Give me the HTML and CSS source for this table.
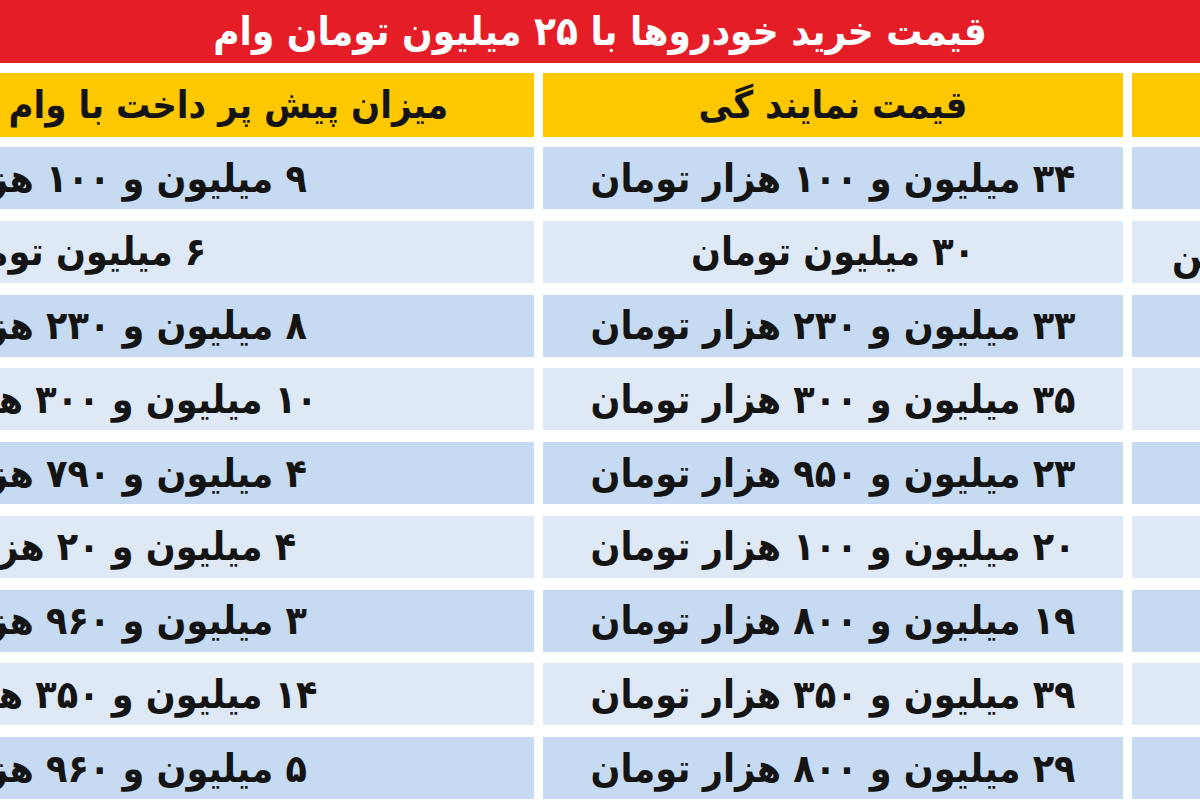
FILE: index.html
```html
<!DOCTYPE html>
<html lang="fa" dir="rtl">
<head>
<meta charset="utf-8">
<title>قیمت خرید خودروها با ۲۵ میلیون تومان وام</title>
<link rel="stylesheet" href="styles.css">
</head>
<body>
<div class="page">
  <div class="title">قیمت خرید خودروها با ۲۵ میلیون تومان وام</div>
  <div class="table">
    <div class="row head">
      <div class="cell car"></div>
      <div class="cell mid">قیمت نمایند گی</div>
      <div class="cell pay">میزان پیش پر داخت با وام ۲۵ میلیون تومانی</div>
    </div>
    <div class="row dark">
      <div class="cell car"></div>
      <div class="cell mid">۳۴ میلیون و ۱۰۰ هزار تومان</div>
      <div class="cell pay">۹ میلیون و ۱۰۰ هزار تومان</div>
    </div>
    <div class="row light">
      <div class="cell car">سایپا ۱۳۲ بنزین</div>
      <div class="cell mid">۳۰ میلیون تومان</div>
      <div class="cell pay">۶ میلیون تومان</div>
    </div>
    <div class="row dark">
      <div class="cell car"></div>
      <div class="cell mid">۳۳ میلیون و ۲۳۰ هزار تومان</div>
      <div class="cell pay">۸ میلیون و ۲۳۰ هزار تومان</div>
    </div>
    <div class="row light">
      <div class="cell car"></div>
      <div class="cell mid">۳۵ میلیون و ۳۰۰ هزار تومان</div>
      <div class="cell pay">۱۰ میلیون و ۳۰۰ هزار تومان</div>
    </div>
    <div class="row dark">
      <div class="cell car"></div>
      <div class="cell mid">۲۳ میلیون و ۹۵۰ هزار تومان</div>
      <div class="cell pay">۴ میلیون و ۷۹۰ هزار تومان</div>
    </div>
    <div class="row light">
      <div class="cell car"></div>
      <div class="cell mid">۲۰ میلیون و ۱۰۰ هزار تومان</div>
      <div class="cell pay">۴ میلیون و ۲۰ هزار تومان</div>
    </div>
    <div class="row dark">
      <div class="cell car"></div>
      <div class="cell mid">۱۹ میلیون و ۸۰۰ هزار تومان</div>
      <div class="cell pay">۳ میلیون و ۹۶۰ هزار تومان</div>
    </div>
    <div class="row light">
      <div class="cell car"></div>
      <div class="cell mid">۳۹ میلیون و ۳۵۰ هزار تومان</div>
      <div class="cell pay">۱۴ میلیون و ۳۵۰ هزار تومان</div>
    </div>
    <div class="row dark">
      <div class="cell car"></div>
      <div class="cell mid">۲۹ میلیون و ۸۰۰ هزار تومان</div>
      <div class="cell pay">۵ میلیون و ۹۶۰ هزار تومان</div>
    </div>
  </div>
</div>
</body>
</html>
```
FILE: styles.css
```css
html, body {
  margin: 0;
  padding: 0;
  background: #ffffff;
}
body {
  width: 1200px;
  height: 800px;
  overflow: hidden;
  font-family: "DejaVu Sans Condensed", "DejaVu Sans", sans-serif;
  font-stretch: condensed;
  font-weight: bold;
  color: #141414;
}
.page {
  width: 1200px;
  height: 800px;
  overflow: hidden;
}
.title {
  height: 63px;
  background: #e41d27;
  color: #ffffff;
  font-size: 40px;
  line-height: 63px;
  text-align: center;
  white-space: nowrap;
}
.table {
  margin-top: 10px;
  margin-right: -480px;
  margin-left: -384px;
  display: flex;
  flex-direction: column;
  gap: 11.75px;
}
.row {
  display: grid;
  grid-template-columns: 548px 580px 918px;
  column-gap: 9px;
  height: 62px;
}
.row.head {
  height: 64px;
  margin-bottom: -1.75px;
}
.cell {
  display: flex;
  align-items: center;
  justify-content: center;
  white-space: nowrap;
  overflow: hidden;
  font-size: 39px;
}
.cell.car {
  justify-content: flex-end;
  padding-left: 40px;
  padding-top: 8px;
  box-sizing: border-box;
}
.head .cell {
  background: #fdc800;
  font-size: 38px;
}
.dark .cell {
  background: #c6dbf1;
}
.light .cell {
  background: #dfe8f5;
}
```
